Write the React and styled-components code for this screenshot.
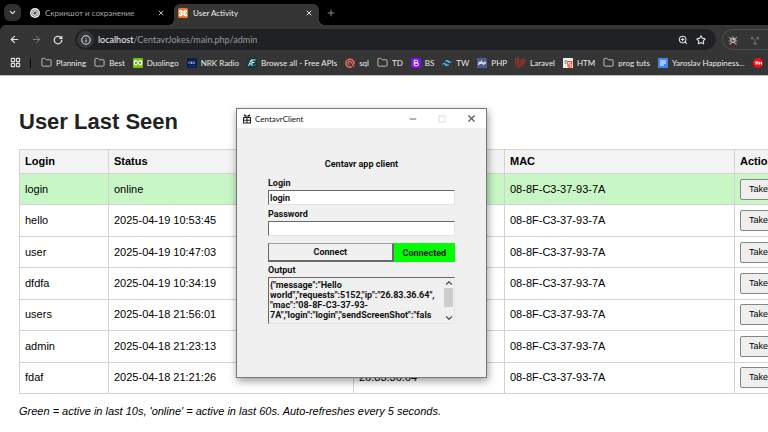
import React from "react";
import styled, { createGlobalStyle } from "styled-components";
import {
  ChevronDown, X, Plus, ArrowLeft, ArrowRight, RotateCw, Info, ZoomIn, Star,
  Folder, LayoutGrid, Minus, Square, ChevronUp,
} from "lucide-react";

const ui = `Lato, "Noto Sans", sans-serif`;

const GlobalStyle = createGlobalStyle`
  * { box-sizing: border-box; }
  body { margin: 0; background: #fff; overflow: hidden; }
  button, input, textarea { font: inherit; color: inherit; margin: 0; }
`;

const Screen = styled.div`
  position: relative;
  min-height: 100vh;
  overflow: hidden;
  background: #fff;
`;

/* ---------- browser ---------- */
const Browser = styled.header`
  background: #000;
  color: #e8e8e8;
  font: 8px/12px ${ui};
  border-bottom: 1px solid #b8b8b8;
`;

const TabStrip = styled.nav`
  display: flex;
  align-items: flex-end;
  height: 25px;
  padding-left: 4px;
`;

const IconButton = styled.button`
  display: flex;
  align-items: center;
  justify-content: center;
  flex: none;
  width: ${(p) => p.$w || 14}px;
  height: ${(p) => p.$h || 14}px;
  padding: 0;
  border: 0;
  border-radius: 6px;
  background: ${(p) => p.$bg || "transparent"};
  color: ${(p) => p.$color || "#e3e3e3"};
`;

const TabSearch = styled.div`
  align-self: center;
`;

const Tab = styled.div`
  position: relative;
  display: flex;
  align-items: center;
  gap: 5px;
  width: ${(p) => (p.$active ? 145 : 150)}px;
  height: 21px;
  margin-left: ${(p) => (p.$active ? 3 : 0)}px;
  padding: 0 3px 3px ${(p) => (p.$active ? 4 : 9)}px;
  border-radius: 6px 6px 0 0;
  background: ${(p) => (p.$active ? "#353535" : "transparent")};
  color: ${(p) => (p.$active ? "#f2f2f2" : "#a4a4a4")};

  &::before, &::after {
    content: "";
    display: ${(p) => (p.$active ? "block" : "none")};
    position: absolute;
    bottom: 0;
    width: 6px;
    height: 6px;
  }
  &::before {
    left: -6px;
    background: radial-gradient(circle at 0 0, #000 6px, #353535 6px);
  }
  &::after {
    right: -6px;
    background: radial-gradient(circle at 100% 0, #000 6px, #353535 6px);
  }
`;

const TabTitle = styled.span`
  flex: 1;
  white-space: nowrap;
`;

const Toolbar = styled.div`
  display: flex;
  align-items: center;
  height: 29px;
  padding-left: 7px;
  border-radius: 6px 0 0 0;
  background: #353535;
`;

const NavButtons = styled.div`
  display: flex;
  gap: 8px;
  width: 68px;
`;

const AddressBar = styled.form`
  display: flex;
  align-items: center;
  flex: 1;
  height: 21px;
  gap: 4px;
  padding: 0 8px 0 2px;
  border-radius: 11px;
  background: #202124;
`;

const SiteInfo = styled(IconButton)`
  border-radius: 50%;
  background: #353639;
`;

const Address = styled.div`
  flex: 1;
  font-size: 9px;
  color: #969a9f;
  b { font-weight: 400; color: #f1f1f1; }
`;

const Extensions = styled.div`
  display: flex;
  align-items: center;
  gap: 12px;
  width: 46px;
  height: 21px;
  margin-left: 6px;
  padding-left: 5px;
  border: 1px solid #4c4c4c;
  border-right: 0;
  border-radius: 11px 0 0 11px;
`;

const Bookmarks = styled.nav`
  display: flex;
  align-items: center;
  gap: 8px;
  height: 21px;
  padding: 0 0 4px 10px;
  overflow: hidden;
  background: #353535;
  svg { flex: none; }
`;

const Divider = styled.span`
  flex: none;
  width: 1px;
  height: 10px;
  margin: 0 2px 0 1px;
  background: #0c0c0c;
`;

const Bookmark = styled.a`
  display: flex;
  align-items: center;
  flex: none;
  gap: 4px;
  color: #ececec;
  text-decoration: none;
  white-space: nowrap;
`;

const Glyph = styled.svg`
  flex: none;
  display: block;
  width: ${(p) => p.$s || 10}px;
  height: ${(p) => p.$s || 10}px;
`;

/* ---------- page ---------- */
const Page = styled.main`
  padding: 32px 0 0 19px;
  font: 11px/13px "Liberation Sans", Arial, sans-serif;
  color: #000;
`;

const Heading = styled.h1`
  margin: 0 0 13px;
  font-size: 22px;
  line-height: 28px;
  font-weight: 700;
  color: #222;
`;

const Table = styled.table`
  width: 840px;
  height: 245px;
  table-layout: fixed;
  border-collapse: collapse;
  th, td {
    padding: 0 5px;
    border: 1px solid #d3d3d3;
    text-align: left;
    white-space: nowrap;
  }
  th { height: 24px; background: #f3f3f3; }
`;

const Col = styled.col`
  width: ${(p) => p.$w}px;
`;

const Row = styled.tr`
  background: ${(p) => (p.$active ? "#c8f7c5" : "#fff")};
`;

const ShotButton = styled.button`
  display: block;
  height: 21px;
  padding: 0 8px;
  border: 1px solid #858585;
  border-radius: 2px;
  background: #efefef;
  font-size: 9px;
  line-height: 11px;
`;

const Note = styled.p`
  margin: 11px 0 0;
  font-style: italic;
`;

/* ---------- desktop window ---------- */
const Window = styled.section`
  position: absolute;
  left: 236px;
  top: 108px;
  width: 251px;
  height: 270px;
  border: 1px solid #777;
  background: #f0f0f0;
  box-shadow: 1px 3px 8px rgba(0, 0, 0, 0.4);
  font: 700 9px/10px Roboto, sans-serif;
  color: #111;
`;

const TitleBar = styled.div`
  display: flex;
  align-items: center;
  height: 19px;
  padding: 0 8px 0 5px;
  gap: 3px;
  background: #fff;
  font: 8px/12px ${ui};
`;

const WindowName = styled.span`
  flex: 1;
`;

const WindowButtons = styled.div`
  display: flex;
  gap: 15px;
`;

const ClientForm = styled.form`
  display: flex;
  flex-direction: column;
  padding: 31px 31px 0;
`;

const ClientTitle = styled.div`
  margin-bottom: 9px;
  text-align: center;
`;

const Label = styled.label`
  margin-bottom: 2px;
`;

const Field = styled.input`
  width: 100%;
  height: 15px;
  margin-bottom: 4px;
  padding: 0 1px;
  border: 1px solid #e3e3e3;
  border-top: 1px solid #696969;
  border-left: 1px solid #696969;
  border-radius: 0;
  background: #fff;
  outline: 0;
`;

const Actions = styled.div`
  display: flex;
  height: 19px;
  margin: 3px 0 3px;
`;

const Connect = styled.button`
  flex: 2;
  padding: 0;
  border: 1px solid #696969;
  border-width: 1px 2px 2px 1px;
  border-top-color: #a0a0a0;
  border-radius: 0;
  background: #f0f0f0;
`;

const StatusLabel = styled.output`
  display: flex;
  align-items: center;
  justify-content: center;
  flex: 1;
  background: #0f0;
`;

const OutputBox = styled.div`
  display: flex;
  height: 47px;
  border: 1px solid #e3e3e3;
  border-top: 1px solid #696969;
  border-left: 1px solid #696969;
`;

const OutputText = styled.textarea`
  flex: 1;
  min-width: 0;
  padding: 2px 1px;
  border: 0;
  outline: 0;
  resize: none;
  overflow: hidden;
  white-space: pre;
  background: transparent;
`;

const ScrollBar = styled.div`
  display: flex;
  flex-direction: column;
  align-items: center;
  width: 11px;
  color: #555;
`;

const Thumb = styled.div`
  width: 9px;
  height: 19px;
  margin-bottom: auto;
  background: #cdcdcd;
`;

/* ---------- small drawings ---------- */
const FolderIcon = () => <Folder size={11} strokeWidth={2} color="#c7c7c7" />;

const ChatIcon = () => (
  <Glyph viewBox="0 0 20 20">
    <circle cx="10" cy="10" r="10" fill="#f2f2f2" />
    <g fill="none" stroke="#333" strokeWidth="1.1">
      {[0, 60, 120, 180, 240, 300].map((a) => (
        <path key={a} transform={`rotate(${a} 10 10)`} d="M7.5 8.5V5.5a3 3 0 0 1 5.4-1.4M7.5 8.5l4 2.4" />
      ))}
    </g>
  </Glyph>
);

const XamppIcon = () => (
  <Glyph viewBox="0 0 20 20">
    <rect width="20" height="20" rx="3" fill="#f5762a" />
    <path d="M7 6.5h6v7H7z M7 6.5a2 2 0 1 0-2 2h10a2 2 0 1 0-2-2M7 13.5a2 2 0 1 1-2-2h10a2 2 0 1 1-2 2" fill="none" stroke="#fff" strokeWidth="2.2" />
  </Glyph>
);

const DuoIcon = () => (
  <Glyph viewBox="0 0 20 20">
    <rect width="20" height="20" rx="2" fill="#6cc500" />
    <ellipse cx="5.5" cy="9.5" rx="4" ry="5.5" fill="#fff" />
    <ellipse cx="14.5" cy="9.5" rx="4" ry="5.5" fill="#fff" />
    <ellipse cx="6" cy="9.5" rx="1.5" ry="2.5" fill="#3b4b34" />
    <ellipse cx="14" cy="9.5" rx="1.5" ry="2.5" fill="#3b4b34" />
    <path d="M8 13h4l-2 3z" fill="#ffb400" />
  </Glyph>
);

const NrkIcon = () => (
  <Glyph viewBox="0 0 20 20">
    <rect width="20" height="20" rx="1" fill="#061f4d" />
    <path d="M4 7v5M6 7l3 5M9 7v5M12 7v5M16 7l-3 2.5 3 2.5" stroke="#b9cdf0" strokeWidth="1.4" fill="none" />
    <path d="M3 16h14" stroke="#30568f" strokeWidth="1" />
  </Glyph>
);

const ApiIcon = () => (
  <Glyph viewBox="0 0 20 20">
    <rect width="20" height="20" rx="2" fill="#0d3a48" />
    <path d="M3 16L8 4h9M10 4v12M5 12h5M10 9h5" stroke="#e9f5f5" strokeWidth="2" fill="none" />
    <path d="M14 16l3-3" stroke="#28c3b0" strokeWidth="2" />
  </Glyph>
);

const SqlIcon = () => (
  <Glyph viewBox="0 0 20 20">
    <path d="M13.5 17.5A8 8 0 1 1 17.6 12.5" fill="none" stroke="#f26a5b" strokeWidth="3" />
    <path d="M9 13a3.2 3.2 0 1 1 3.5-4.5L18 18" fill="none" stroke="#f26a5b" strokeWidth="2.6" />
  </Glyph>
);

const BootstrapIcon = () => (
  <Glyph viewBox="0 0 20 20">
    <rect width="20" height="20" rx="3" fill="#7a12f5" />
    <path d="M6.5 4.5h4.5a2.6 2.6 0 0 1 0 5.2H6.5zM6.5 9.7H12a2.9 2.9 0 0 1 0 5.8H6.5z" fill="none" stroke="#fff" strokeWidth="2" />
  </Glyph>
);

const TailwindIcon = () => (
  <Glyph viewBox="0 0 24 24">
    <path fill="#38bdf8" d="M12 5c-3.2 0-5.2 1.6-6 4.8 1.2-1.6 2.6-2.2 4.2-1.8.9.2 1.6.9 2.3 1.6C13.7 10.8 15.1 12 18 12c3.2 0 5.2-1.6 6-4.8-1.2 1.6-2.6 2.2-4.2 1.8-.9-.2-1.6-.9-2.3-1.6C16.3 6.2 14.9 5 12 5zM6 12c-3.2 0-5.2 1.6-6 4.8 1.2-1.6 2.6-2.2 4.2-1.8.9.2 1.6.9 2.3 1.6C7.7 17.8 9.1 19 12 19c3.2 0 5.2-1.6 6-4.8-1.2 1.6-2.6 2.2-4.2 1.8-.9-.2-1.6-.9-2.3-1.6C10.3 13.2 8.9 12 6 12z" />
  </Glyph>
);

const PhpIcon = () => (
  <Glyph viewBox="0 0 20 20">
    <rect width="20" height="20" rx="1" fill="#4f5b93" />
    <path d="M3 14l1.5-6H6a1.5 1.5 0 0 1 0 3.5H4M9 5l-1.5 7M8.4 8.5h1.8q1 0 .8 1l-.5 2.5M12.5 14L14 8h1.5a1.5 1.5 0 0 1 0 3.5h-2" fill="none" stroke="#fff" strokeWidth="1.8" />
  </Glyph>
);

const LaravelIcon = () => (
  <Glyph viewBox="0 0 20 20" $s={11}>
    <path d="M1 3l3-1.5L7 3v8l4-2V5.5L14.5 4 18 5.5V10l-3.5 2v3.5L7 19l-6-3.5zM1 3l3 1.5L7 3M4 4.5V13l3 2 7.5-4M11 5.5l3.5 2 3.5-2M14.5 7.5V12L11 9.5M7 15v4" fill="none" stroke="#d5302b" strokeWidth="1.2" />
  </Glyph>
);

const HtmIcon = () => (
  <Glyph viewBox="0 0 20 20">
    <rect width="20" height="20" rx="1" fill="#f4f2f1" />
    <path d="M8 5H4v6h3M5 8h3" fill="none" stroke="#777" strokeWidth="1.5" />
    <path d="M8 6h11l-1 12-5 2-4-2z" fill="#e8552d" />
    <path d="M16 9h-5v3h4.5v3.5L13 16.5 11 15.5" fill="none" stroke="#fff" strokeWidth="1.5" />
  </Glyph>
);

const DocIcon = () => (
  <Glyph viewBox="0 0 20 20">
    <rect width="20" height="20" rx="2" fill="#4285f4" />
    <path d="M4 6h12M4 10h12M4 14h8" stroke="#fff" strokeWidth="2" />
  </Glyph>
);

const RedIcon = () => (
  <Glyph viewBox="0 0 20 20">
    <circle cx="10" cy="10" r="10" fill="#f40d12" />
    <path d="M6 6v7M6 9.5h4M10 6v7M13 13V8.5l2 2 2-2V13" stroke="#fff" strokeWidth="2" fill="none" />
  </Glyph>
);

const BugIcon = () => (
  <Glyph viewBox="0 0 20 20">
    <path d="M2 4l4 4M18 4l-4 4" stroke="#e8614f" strokeWidth="2.5" />
    <path d="M1 12h4M15 12h4M10 2v3" stroke="#3fb7a4" strokeWidth="2" />
    <path d="M3 19l4-4M17 19l-4-4" stroke="#ec684f" strokeWidth="3" />
    <circle cx="10" cy="10.5" r="4.5" fill="#294554" stroke="#dce9ed" strokeWidth="2" />
    <circle cx="11" cy="9.5" r="1.5" fill="#fff" />
  </Glyph>
);

const RadiationIcon = () => (
  <Glyph viewBox="0 0 20 20">
    <g fill="#737373">
      <path d="M8 9L1 8l3-6zM12 9l7-1-3-6zM10 12l4 7H6z" />
      <circle cx="10" cy="10" r="1.5" />
    </g>
  </Glyph>
);

const GiftIcon = () => (
  <Glyph viewBox="0 0 20 20">
    <path d="M3 7h14v11H3zM3 12.5h14M10 6v12" fill="none" stroke="#222" strokeWidth="2.2" />
    <path d="M4 2l5 3M16 2l-5 3" fill="none" stroke="#222" strokeWidth="3" />
  </Glyph>
);

const bookmarks = [
  ["Planning", FolderIcon], ["Best", FolderIcon], ["Duolingo", DuoIcon],
  ["NRK Radio", NrkIcon], ["Browse all - Free APIs", ApiIcon], ["sql", SqlIcon],
  ["TD", FolderIcon], ["BS", BootstrapIcon], ["TW", TailwindIcon],
  ["PHP", PhpIcon], ["Laravel", LaravelIcon], ["HTM", HtmIcon],
  ["prog tuts", FolderIcon], ["Yaroslav Happiness...", DocIcon],
];

const users = [
  ["login", "online"],
  ["hello", "2025-04-19 10:53:45"],
  ["user", "2025-04-19 10:47:03"],
  ["dfdfa", "2025-04-19 10:34:19"],
  ["users", "2025-04-18 21:56:01"],
  ["admin", "2025-04-18 21:23:13"],
  ["fdaf", "2025-04-18 21:21:26"],
];

const output = `{"message":"Hello
world","requests":5152,"ip":"26.83.36.64",
"mac":"08-8F-C3-37-93-
7A","login":"login","sendScreenShot":"fals`;

export default function App() {
  return (
    <Screen>
      <GlobalStyle />
      <Browser>
        <TabStrip>
          <TabSearch>
            <IconButton $w={17} $h={17} $bg="#303030" aria-label="Search tabs">
              <ChevronDown size={9} strokeWidth={3} />
            </IconButton>
          </TabSearch>
          <Tab>
            <ChatIcon />
            <TabTitle>Скриншот и сохранение</TabTitle>
            <IconButton aria-label="Close tab" $color="#b5b5b5"><X size={8} strokeWidth={3} /></IconButton>
          </Tab>
          <Tab $active>
            <XamppIcon />
            <TabTitle>User Activity</TabTitle>
            <IconButton aria-label="Close tab"><X size={8} strokeWidth={3} /></IconButton>
          </Tab>
          <IconButton $w={24} $h={24} $color="#a5a5a5" aria-label="New tab"><Plus size={10} /></IconButton>
        </TabStrip>
        <Toolbar>
          <NavButtons>
            <IconButton aria-label="Back"><ArrowLeft size={11} strokeWidth={2.5} /></IconButton>
            <IconButton aria-label="Forward" $color="#858585"><ArrowRight size={11} /></IconButton>
            <IconButton aria-label="Reload"><RotateCw size={10} strokeWidth={3} /></IconButton>
          </NavButtons>
          <AddressBar>
            <SiteInfo type="button" $w={17} $h={17} aria-label="Site information"><Info size={10} strokeWidth={2.5} /></SiteInfo>
            <Address><b>localhost</b>/CentavrJokes/main.php/admin</Address>
            <IconButton type="button" aria-label="Zoom"><ZoomIn size={10} strokeWidth={2.5} /></IconButton>
            <IconButton type="button" aria-label="Bookmark"><Star size={10} strokeWidth={2.5} /></IconButton>
          </AddressBar>
          <Extensions><BugIcon /><RadiationIcon /></Extensions>
        </Toolbar>
        <Bookmarks>
          <LayoutGrid size={11} strokeWidth={2.5} color="#dedede" />
          <Divider />
          {bookmarks.map(([name, Icon]) => (
            <Bookmark href="#" key={name}><Icon />{name}</Bookmark>
          ))}
          <Bookmark href="#" aria-label="HH"><RedIcon /></Bookmark>
        </Bookmarks>
      </Browser>

      <Page>
        <Heading>User Last Seen</Heading>
        <Table>
          <colgroup>
            <Col $w={89} /><Col $w={245} /><Col $w={151} /><Col $w={230} /><Col $w={125} />
          </colgroup>
          <thead>
            <tr><th>Login</th><th>Status</th><th>IP</th><th>MAC</th><th>Action</th></tr>
          </thead>
          <tbody>
            {users.map(([login, status]) => (
              <Row key={login} $active={status === "online"}>
                <td>{login}</td>
                <td>{status}</td>
                <td>26.83.36.64</td>
                <td>08-8F-C3-37-93-7A</td>
                <td><ShotButton>Take Screenshot</ShotButton></td>
              </Row>
            ))}
          </tbody>
        </Table>
        <Note>Green = active in last 10s, 'online' = active in last 60s. Auto-refreshes every 5 seconds.</Note>
      </Page>

      <Window>
        <TitleBar>
          <GiftIcon />
          <WindowName>CentavrClient</WindowName>
          <WindowButtons>
            <IconButton $color="#444" aria-label="Minimize"><Minus size={10} /></IconButton>
            <IconButton $color="#c8c8c8" aria-label="Maximize"><Square size={8} strokeWidth={2} /></IconButton>
            <IconButton $color="#555" aria-label="Close"><X size={11} strokeWidth={2.5} /></IconButton>
          </WindowButtons>
        </TitleBar>
        <ClientForm>
          <ClientTitle>Centavr app client</ClientTitle>
          <Label htmlFor="login">Login</Label>
          <Field id="login" defaultValue="login" />
          <Label htmlFor="password">Password</Label>
          <Field id="password" type="password" />
          <Actions>
            <Connect type="button">Connect</Connect>
            <StatusLabel>Connected</StatusLabel>
          </Actions>
          <Label htmlFor="output">Output</Label>
          <OutputBox>
            <OutputText id="output" readOnly defaultValue={output} />
            <ScrollBar>
              <ChevronUp size={10} strokeWidth={3} />
              <Thumb />
              <ChevronDown size={10} strokeWidth={3} />
            </ScrollBar>
          </OutputBox>
        </ClientForm>
      </Window>
    </Screen>
  );
}
